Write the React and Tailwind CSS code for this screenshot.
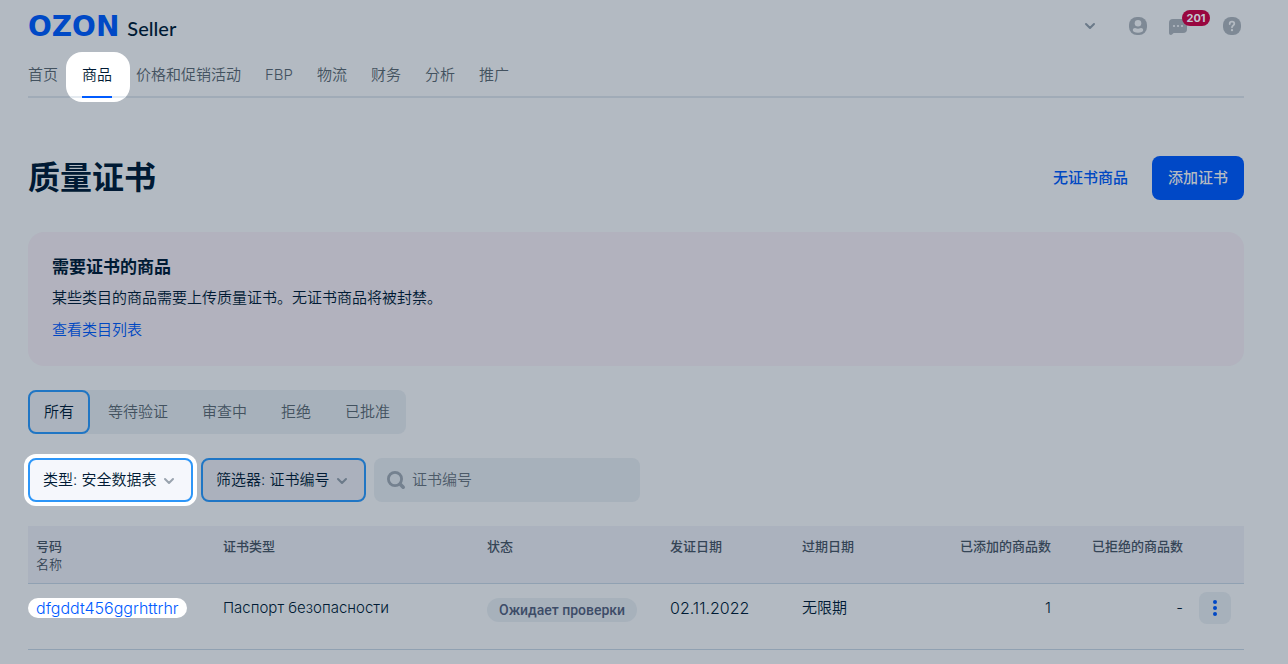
import { useState } from 'react';

const navItems = ['首页', '商品', '价格和促销活动', 'FBP', '物流', '财务', '分析', '推广'];
const tabs = ['所有', '等待验证', '审查中', '拒绝', '已批准'];

const Chevron = ({ className }) => (
    <svg viewBox="0 0 12 8" className={`w-3 h-2 ${className}`} fill="none" stroke="currentColor" strokeWidth="2" strokeLinecap="round" strokeLinejoin="round" aria-hidden="true">
        <path d="M2 2l4 4 4-4" />
    </svg>
);

const UserIcon = () => (
    <svg viewBox="0 0 24 24" className="w-6 h-6" aria-hidden="true">
        <rect x="3" y="3" width="18" height="18" rx="8" fill="#7e8995" />
        <circle cx="12" cy="9.3" r="3.3" fill="#b3bac2" />
        <path d="M6.8 16.2c0-1.8 1.6-2.4 2.9-2 1.5.6 3.1.6 4.6 0 1.3-.4 2.9.2 2.9 2 0 1.6-2.3 2.5-5.2 2.5s-5.2-.9-5.2-2.5z" fill="#b3bac2" />
    </svg>
);

const ChatIcon = () => (
    <svg viewBox="0 0 24 24" className="w-6 h-6" aria-hidden="true">
        <path d="M7 5h10c2.8 0 4 1.2 4 4v6c0 2.8-1.200 4-4 4H8.500c-1 0-1.500.5-2.200 1.300-1.200 1.300-3.300.7-3.300-1.300V9c0-2.800 1.200-4 4-4z" fill="#7e8995" />
        <circle cx="8" cy="12" r="1.1" fill="#b3bac2" />
        <circle cx="12" cy="12" r="1.1" fill="#b3bac2" />
        <circle cx="16" cy="12" r="1.1" fill="#b3bac2" />
    </svg>
);

const HelpIcon = () => (
    <svg viewBox="0 0 24 24" className="w-6 h-6" fill="none" aria-hidden="true">
        <rect x="3" y="3" width="18" height="18" rx="8" fill="#7e8995" />
        <path d="M9.7 10c0-1.5 1-2.3 2.3-2.3s2.3.8 2.3 2.1c0 1.7-2.3 1.8-2.3 3.5" stroke="#b3bac2" strokeWidth="1.8" strokeLinecap="round" />
        <circle cx="12" cy="16.2" r="1.15" fill="#b3bac2" />
    </svg>
);

const SearchIcon = () => (
    <svg viewBox="0 0 24 24" className="w-6 h-6" fill="none" stroke="#74818f" aria-hidden="true">
        <circle cx="11" cy="11" r="6.6" strokeWidth="2.8" />
        <path d="M16.5 16.5l2.7 2.7" strokeWidth="3.6" strokeLinecap="round" />
    </svg>
);

const Filter = ({ label, value, highlighted }) => (
    <div className="relative">
        <select
            aria-label={label}
            className={`block w-[165px] h-11 pl-[13px] pr-8 rounded-lg border-2 appearance-none text-[15px] text-[#001a34] focus:outline-none ${highlighted ? 'bg-[#f5f7fc] border-[#2d96f8] ring-4 ring-white' : 'bg-[#abb1bd] border-[#2076c4]'}`}
        >
            <option>{label}: {value}</option>
        </select>
        <Chevron className={`absolute right-[18px] top-[19px] pointer-events-none ${highlighted ? 'text-[#99a3ae]' : 'text-[#6b7a89]'}`} />
    </div>
);

const App = () => {
    const [activeNav, setActiveNav] = useState('商品');
    const [activeTab, setActiveTab] = useState('所有');
    const [query, setQuery] = useState('');

    return (
        <div className="min-h-screen bg-[#b3bac2] pl-7 pr-11 text-[15px] leading-6 font-[350] text-[#001a34] font-[Inter,'Noto_Sans_CJK_SC',sans-serif]">
            {/* Header */}
            <header>
                <div className="flex items-center justify-between h-[52px]">
                    <a href="#" className="flex items-baseline gap-2 pt-0.5 leading-8">
                        <span className="text-[28px] font-bold text-[#0049c6] font-['DejaVu_Sans',sans-serif]">OZON</span>
                        <span className="text-xl font-medium font-[Lato,sans-serif]">Seller</span>
                    </a>
                    <div className="flex items-center text-[#6b7a89]">
                        <button type="button" aria-label="Account" className="flex items-center justify-center w-6 h-6 mr-6">
                            <Chevron className="" />
                        </button>
                        <button type="button" aria-label="Profile" className="mr-4"><UserIcon /></button>
                        <button type="button" aria-label="Messages" className="relative mr-[30px]">
                            <ChatIcon />
                            <span className="absolute left-4 -top-1 flex items-center justify-center w-7 h-4 rounded-full bg-[#99063f] text-[11px] leading-4 font-bold text-[#c3c8d0]">201</span>
                        </button>
                        <button type="button" aria-label="Help"><HelpIcon /></button>
                    </div>
                </div>
                <nav className="flex gap-6 border-b-2 border-[#a0abb7] text-[#43525f]">
                    {navItems.map((item) => (
                        <a key={item} href="#" onClick={() => setActiveNav(item)} className="relative flex items-center h-11 pt-0.5">
                            {activeNav === item && (
                                <span className="absolute -left-4 -right-[18px] top-0 -bottom-1.5 rounded-2xl bg-white overflow-hidden">
                                    <span className="absolute inset-x-0 bottom-1 h-0.5 bg-[#e5ebf1]"></span>
                                    <span className="absolute left-4 right-[18px] bottom-1 h-0.5 bg-[#005bff]"></span>
                                </span>
                            )}
                            <span className={activeNav === item ? 'relative text-[#001a34]' : 'relative'}>{item}</span>
                        </a>
                    ))}
                </nav>
            </header>

            <main>
                <div className="flex items-center justify-between mt-[58px]">
                    <h1 className="text-[32px] leading-10 font-bold">质量证书</h1>
                    <div className="flex items-center gap-6 font-medium">
                        <a href="#" className="text-[#0048c2]">无证书商品</a>
                        <button type="button" className="h-11 px-4 rounded-lg bg-[#0048c6] text-[#b3bac2]">添加证书</button>
                    </div>
                </div>

                {/* Notice */}
                <section className="mt-8 p-6 rounded-2xl bg-[#b2b2be]">
                    <h2 className="text-[17px] leading-[22px] font-bold">需要证书的商品</h2>
                    <p className="mt-2">某些类目的商品需要上传质量证书。无证书商品将被封禁。</p>
                    <a href="#" className="block mt-2 text-[#0048c2]">查看类目列表</a>
                </section>

                {/* Status tabs */}
                <div className="flex w-fit gap-0.5 mt-6 rounded-lg bg-[#a7b1bb] text-[#43525f]">
                    {tabs.map((tab) => (
                        <button
                            key={tab}
                            type="button"
                            onClick={() => setActiveTab(tab)}
                            className={`h-11 px-3.5 rounded-lg border-2 ${activeTab === tab ? 'border-[#2076c4] bg-[#abb3be] text-[#001a34]' : 'border-transparent'}`}
                        >
                            {tab}
                        </button>
                    ))}
                </div>

                {/* Filters */}
                <div className="flex gap-2 mt-6">
                    <Filter label="类型" value="安全数据表" highlighted />
                    <Filter label="筛选器" value="证书编号" />
                    <label className="flex items-center gap-1 w-[266px] h-11 px-2.5 rounded-lg bg-[#a7b1bb]">
                        <SearchIcon />
                        <input
                            type="text"
                            aria-label="证书编号"
                            placeholder="证书编号"
                            value={query}
                            onChange={(e) => setQuery(e.target.value)}
                            className="flex-1 min-w-0 bg-transparent placeholder:text-[#4c5a68] focus:outline-none"
                        />
                    </label>
                </div>

                {/* Certificates */}
                <table className="w-full mt-6 table-fixed border-separate border-spacing-0 text-left">
                    <colgroup>
                        <col className="w-[187px]" />
                        <col />
                        <col className="w-[183px]" />
                        <col className="w-[132px]" />
                        <col className="w-[132px]" />
                        <col className="w-[133px]" />
                        <col className="w-[132px]" />
                        <col className="w-[53px]" />
                    </colgroup>
                    <thead>
                        <tr className="h-[58px] align-top bg-[#abb2be] text-[13px] leading-[18px] text-[#354556] *:border-b *:border-[#90a1b2]">
                            <th className="px-2 pt-[11px] font-medium">
                                号码
                                <span className="block font-[350]">名称</span>
                            </th>
                            <th className="px-2 pt-[11px] font-medium">证书类型</th>
                            <th className="px-2 pt-[11px] font-medium">状态</th>
                            <th className="px-2 pt-[11px] font-medium">发证日期</th>
                            <th className="px-2 pt-[11px] font-medium">过期日期</th>
                            <th className="px-2 pt-[11px] font-medium text-right">已添加的商品数</th>
                            <th className="px-2 pt-[11px] font-medium text-right">已拒绝的商品数</th>
                            <th></th>
                        </tr>
                    </thead>
                    <tbody>
                        <tr className="h-[66px] align-top *:border-b *:border-[#90a1b2]">
                            <td className="pt-3.5">
                                <a href="#" className="block w-fit px-2 rounded-full bg-white text-base leading-5 font-light text-[#005bff]">dfgddt456ggrhttrhr</a>
                            </td>
                            <td className="px-2 pt-3">Паспорт безопасности</td>
                            <td className="px-2 pt-3.5">
                                <span className="block w-fit px-3 rounded-full bg-[#a7b1bb] text-sm leading-6 font-medium text-[#3d4c68] font-[Roboto,sans-serif]">Ожидает проверки</span>
                            </td>
                            <td className="px-2 pt-3 text-base">02.11.2022</td>
                            <td className="px-2 pt-3">无限期</td>
                            <td className="px-2 pt-3 text-right">1</td>
                            <td className="px-2 pt-3 text-right">-</td>
                            <td className="pl-2 pt-2">
                                <button type="button" aria-label="More" className="flex items-center justify-center w-8 h-8 rounded-lg bg-[#a7b1bb]">
                                    <svg viewBox="0 0 16 16" className="w-4 h-4" fill="#0048c6" aria-hidden="true">
                                        <circle cx="8" cy="2" r="2" />
                                        <circle cx="8" cy="8" r="2" />
                                        <circle cx="8" cy="14" r="2" />
                                    </svg>
                                </button>
                            </td>
                        </tr>
                    </tbody>
                </table>
            </main>
        </div>
    );
};

export default App;
